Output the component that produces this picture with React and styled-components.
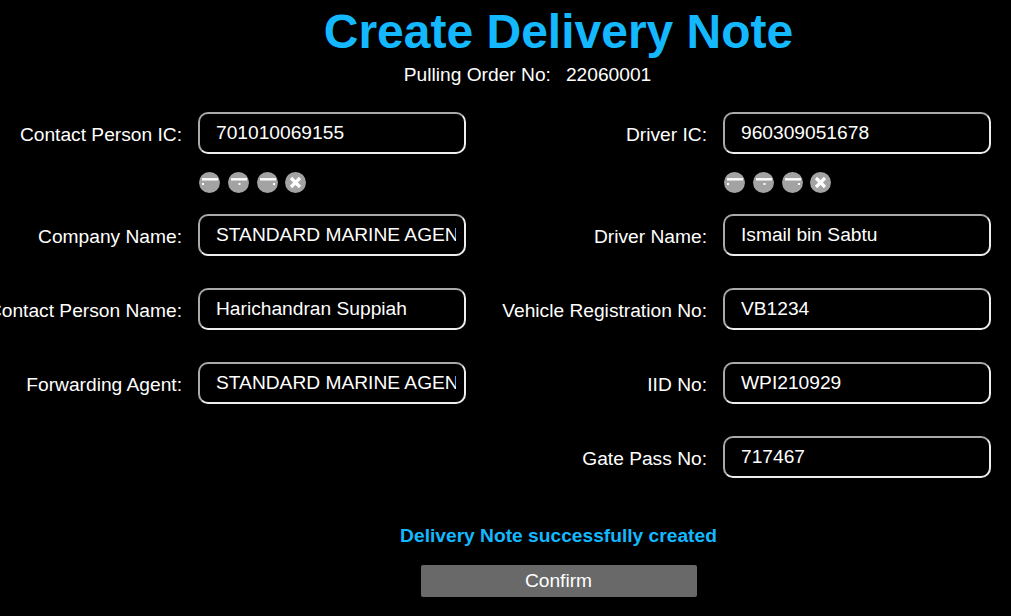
import React from "react";
import styled, { createGlobalStyle } from "styled-components";

const Global = createGlobalStyle`
  html, body {
    margin: 0;
    padding: 0;
    background: #000;
    overflow: hidden;
  }
  body {
    font-family: "Liberation Sans", Arial, sans-serif;
    color: #fff;
  }
`;

const Page = styled.div`
  width: 1011px;
  height: 616px;
  overflow: hidden;
  background: #000;
`;

const Header = styled.div`
  padding-left: 106px;
  text-align: center;
`;

const Title = styled.h1`
  margin: 0;
  padding-top: 4px;
  font-size: 48px;
  line-height: 55px;
  font-weight: bold;
  color: #14b8ff;
`;

const OrderNo = styled.div`
  margin-top: 5px;
  padding-right: 62px;
  font-size: 19.2px;
  line-height: 22px;
  span {
    margin-left: 15px;
  }
`;

const Columns = styled.div`
  display: grid;
  grid-template-columns: 466px 466px;
  column-gap: 59px;
  margin-top: 26px;
`;

const Column = styled.div`
  display: flex;
  flex-direction: column;
`;

const Row = styled.div`
  display: flex;
  align-items: center;
  height: 42px;
  margin-bottom: 32px;
`;

const Label = styled.label`
  display: flex;
  justify-content: flex-end;
  flex: 0 0 182px;
  width: 182px;
  margin-right: 16px;
  padding-top: 3px;
  font-size: 19.2px;
  white-space: nowrap;
`;

const Input = styled.input`
  box-sizing: border-box;
  width: 268px;
  height: 42px;
  padding: 0 8px 0 16px;
  background: #000;
  border: 2px solid;
  border-color: #a9a9a9 #eeeeee #eeeeee #a9a9a9;
  border-radius: 10px;
  color: #fff;
  font-family: "Liberation Sans", Arial, sans-serif;
  font-size: 19.2px;
  outline: none;
`;

const Steps = styled.div`
  display: flex;
  gap: 7.67px;
  height: 21px;
  margin: -14px 0 21px 199.3px;
`;

const Footer = styled.div`
  display: flex;
  flex-direction: column;
  align-items: center;
  padding-left: 106px;
`;

const Message = styled.div`
  margin-top: 15px;
  font-size: 19.2px;
  line-height: 22px;
  font-weight: bold;
  color: #14b8ff;
`;

const Confirm = styled.button`
  width: 276px;
  height: 32px;
  margin-top: 18px;
  padding: 0;
  background: #696969;
  border: 0;
  border-radius: 2px;
  color: #fff;
  font-family: "Liberation Sans", Arial, sans-serif;
  font-size: 19.2px;
`;

const ticks = {
  left: "M3 12h2",
  mid: "M10.5 12h2",
  right: "M16 12h2",
};

const StepIcon = ({ kind }) => (
  <svg width="21" height="21" viewBox="0 0 21 21">
    <circle cx="10.5" cy="10.5" r="10.5" fill="#a3a3a3" />
    {kind === "x" ? (
      <path d="M6 6l9 9M15 6l-9 9" stroke="#fff" strokeWidth="3.2" />
    ) : (
      <>
        <path d="M3 7.3h16" stroke="#fff" strokeWidth="2.4" />
        <path d={ticks[kind]} stroke="#fff" strokeWidth="2" />
      </>
    )}
  </svg>
);

const StepRow = () => (
  <Steps>
    <StepIcon kind="left" />
    <StepIcon kind="mid" />
    <StepIcon kind="right" />
    <StepIcon kind="x" />
  </Steps>
);

const Field = ({ label, value }) => (
  <Row>
    <Label>{label}</Label>
    <Input readOnly value={value} />
  </Row>
);

export default function App() {
  return (
    <Page>
      <Global />
      <Header>
        <Title>Create Delivery Note</Title>
        <OrderNo>
          Pulling Order No:<span>22060001</span>
        </OrderNo>
      </Header>
      <Columns>
        <Column>
          <Field label="Contact Person IC:" value="701010069155" />
          <StepRow />
          <Field label="Company Name:" value="STANDARD MARINE AGENCIES" />
          <Field label="Contact Person Name:" value="Harichandran Suppiah" />
          <Field label="Forwarding Agent:" value="STANDARD MARINE AGENCIES" />
        </Column>
        <Column>
          <Field label="Driver IC:" value="960309051678" />
          <StepRow />
          <Field label="Driver Name:" value="Ismail bin Sabtu" />
          <Field label="Vehicle Registration No:" value="VB1234" />
          <Field label="IID No:" value="WPI210929" />
          <Field label="Gate Pass No:" value="717467" />
        </Column>
      </Columns>
      <Footer>
        <Message>Delivery Note successfully created</Message>
        <Confirm>Confirm</Confirm>
      </Footer>
    </Page>
  );
}
